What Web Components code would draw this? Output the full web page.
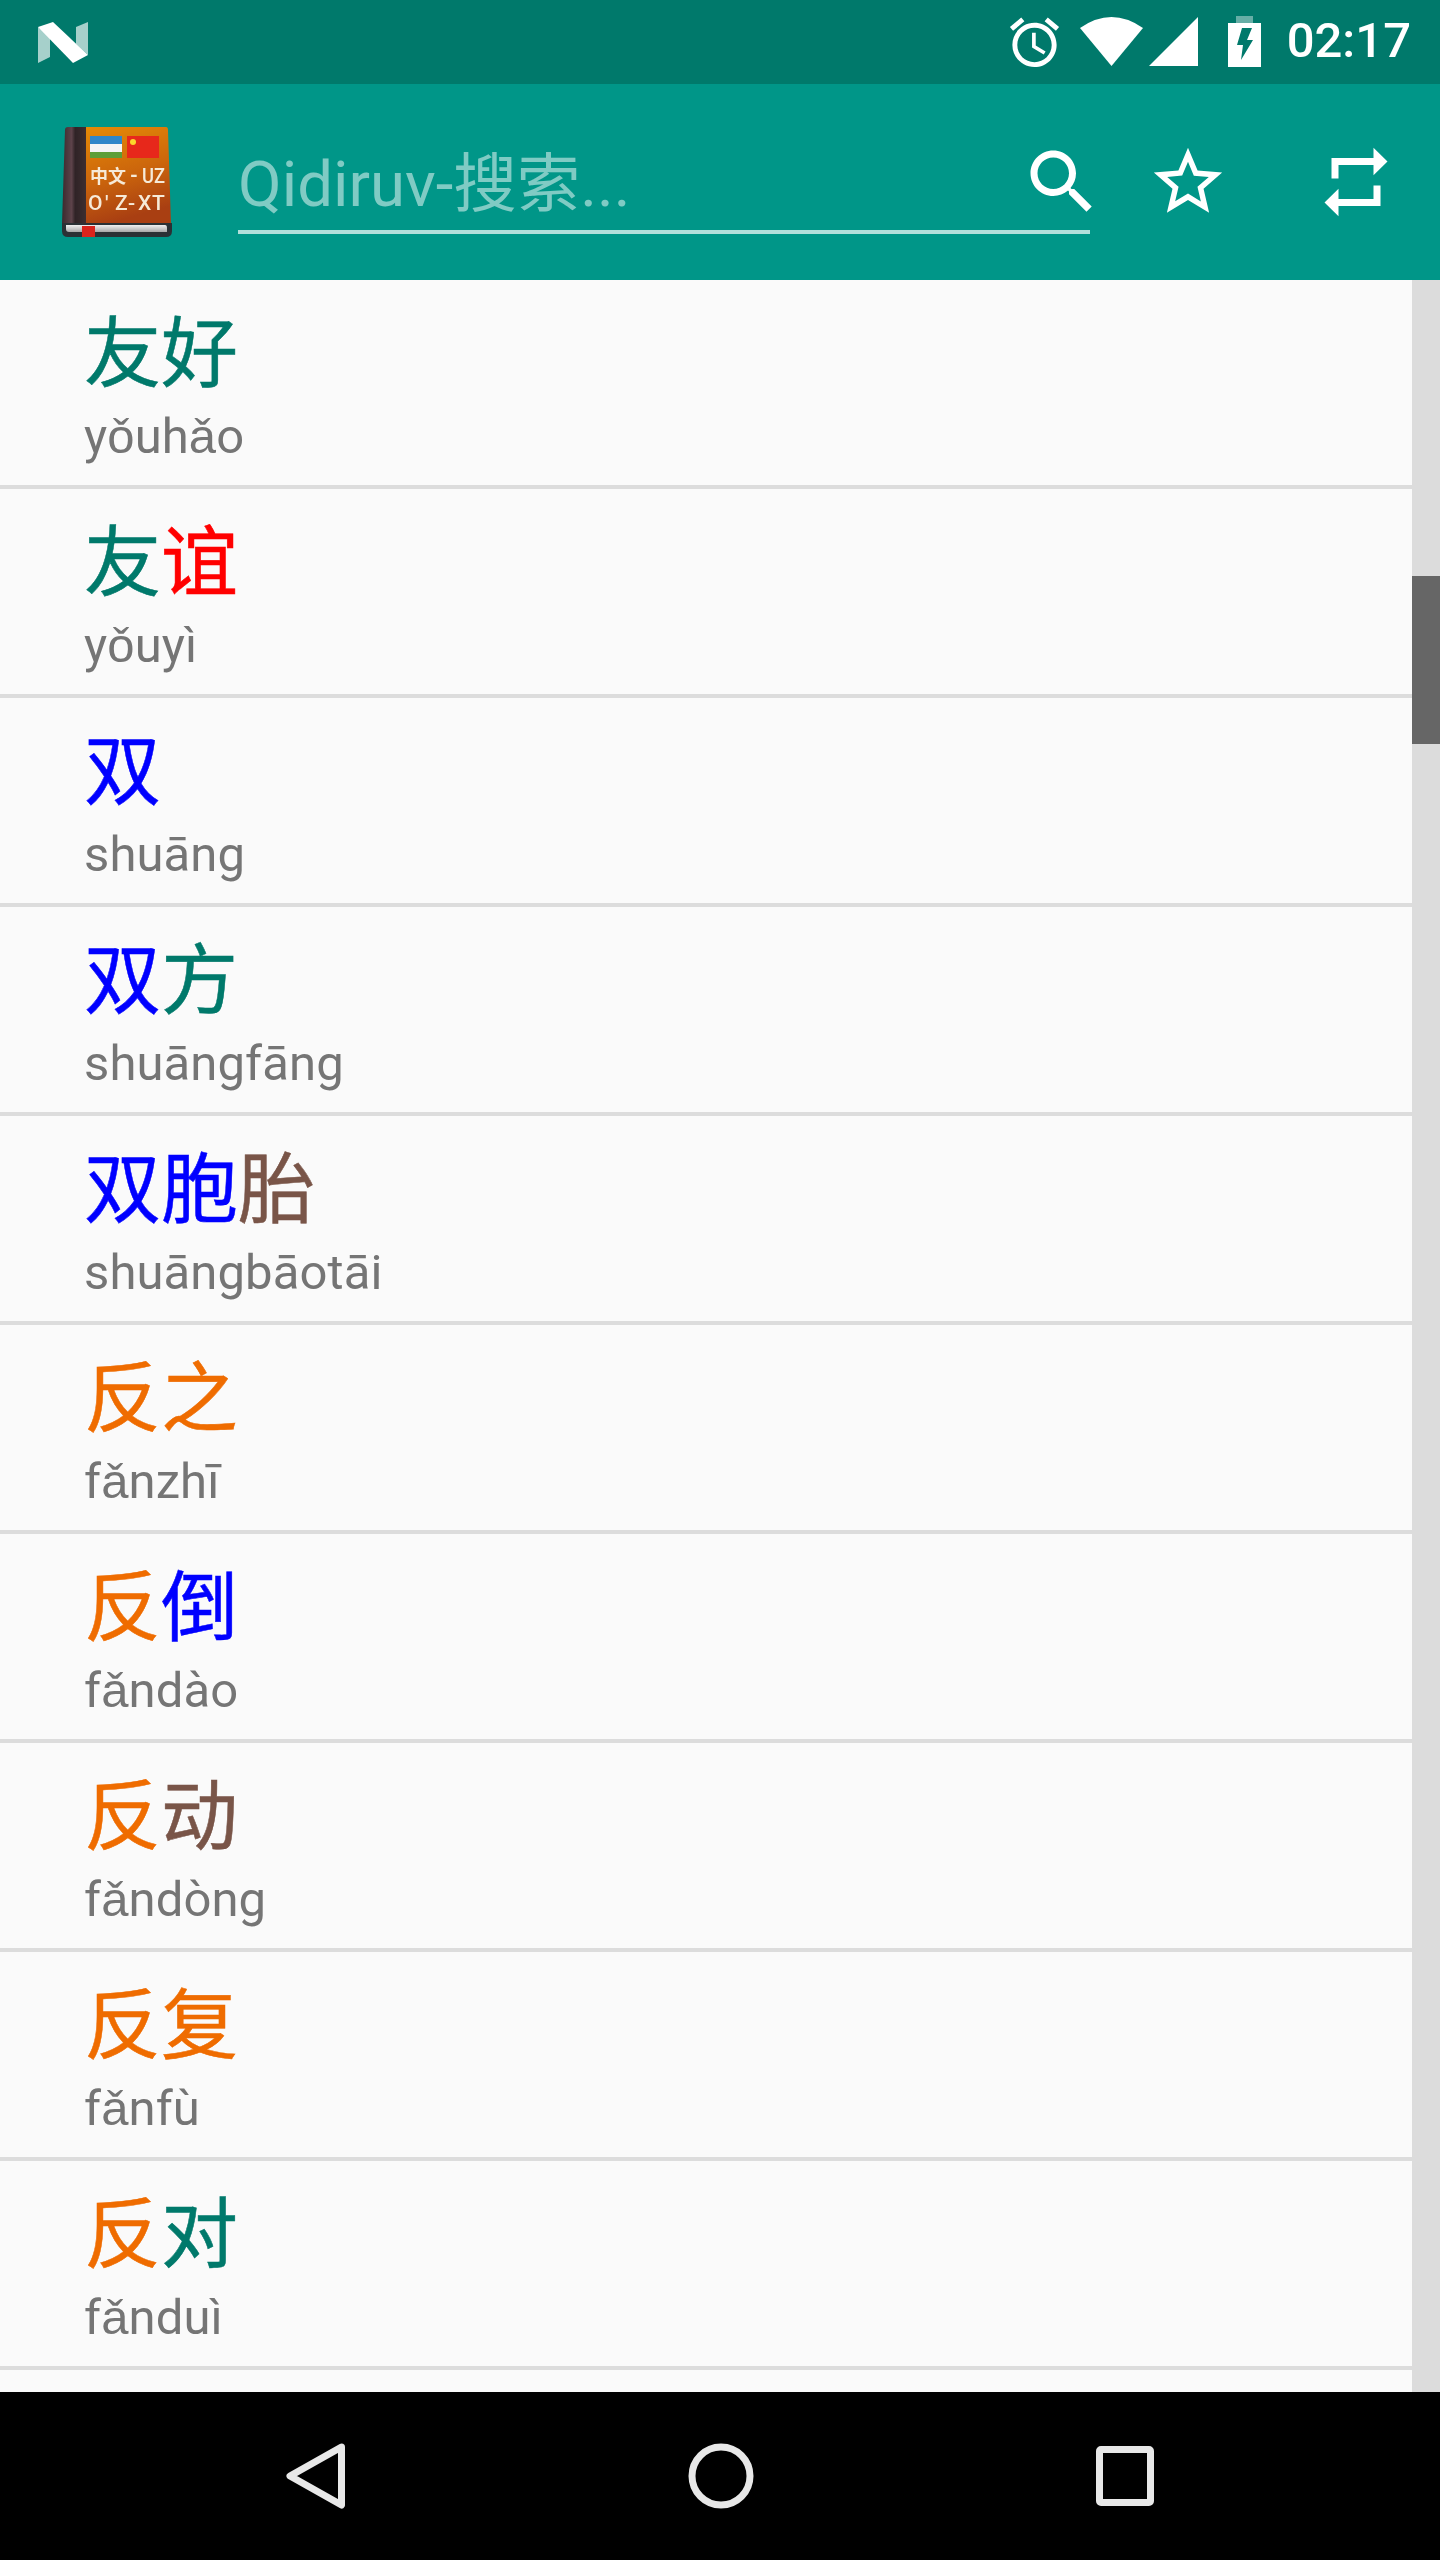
<!DOCTYPE html>
<html><head><meta charset="utf-8"><style>
html,body{margin:0;padding:0;background:#fafafa}
body{font-family:Roboto,"Noto Sans CJK SC",sans-serif}
dict-app{display:flex;flex-direction:column;width:1440px;height:2560px;overflow:hidden}
</style></head><body>
<dict-app>
  <status-bar></status-bar>
  <app-toolbar></app-toolbar>
  <word-list>
    <word-row pinyin="yǒuhǎo"><span style="color:#00796b">友好</span></word-row>
    <word-row pinyin="yǒuyì"><span style="color:#00796b">友</span><span style="color:#f00">谊</span></word-row>
    <word-row pinyin="shuāng"><span style="color:#00f">双</span></word-row>
    <word-row pinyin="shuāngfāng"><span style="color:#00f">双</span><span style="color:#00796b">方</span></word-row>
    <word-row pinyin="shuāngbāotāi"><span style="color:#00f">双胞</span><span style="color:#795548">胎</span></word-row>
    <word-row pinyin="fǎnzhī"><span style="color:#ef6c00">反之</span></word-row>
    <word-row pinyin="fǎndào"><span style="color:#ef6c00">反</span><span style="color:#00f">倒</span></word-row>
    <word-row pinyin="fǎndòng"><span style="color:#ef6c00">反</span><span style="color:#795548">动</span></word-row>
    <word-row pinyin="fǎnfù"><span style="color:#ef6c00">反复</span></word-row>
    <word-row pinyin="fǎnduì"><span style="color:#ef6c00">反</span><span style="color:#00796b">对</span></word-row>
  </word-list>
  <nav-bar></nav-bar>
</dict-app>
<script>
function def(name, css, html, extra){
  customElements.define(name, class extends HTMLElement{
    constructor(){super();this.attachShadow({mode:'open'}).innerHTML='<style>'+css+'</style>'+html;}
    connectedCallback(){ if(extra) extra(this); }
  });
}
def('status-bar',`
:host{display:flex;align-items:flex-start;flex:none;height:84px;background:#00796b;color:#fff;box-sizing:border-box;padding:0 29px 0 38px}
svg{display:block;flex:none}
.n{margin-top:22px}
.sp{flex:1}
.alarm{margin-top:13px}
.wifi{margin-top:17px;margin-left:16px}
.sig{margin-top:17px;margin-left:6px}
.bat{margin-top:16px;margin-left:30px}
.time{font:500 49px/84px Roboto,sans-serif;margin-left:26px;margin-top:-1px;letter-spacing:0}
`,`
<svg class="n" width="50" height="41" viewBox="0 0 50 41"><polygon points="0,5 12,14 12,35 0,41" fill="#fff" fill-opacity=".65"/><polygon points="50,0 50,33 38,22 38,5" fill="#fff" fill-opacity=".65"/><polygon points="0,5 15,0 50,33 35,41" fill="#fff"/></svg>
<span class="sp"></span>
<svg class="alarm" width="59" height="59" viewBox="0 0 24 24" fill="#fff"><path d="M22 5.72l-4.6-3.86-1.29 1.53 4.6 3.86L22 5.72zM7.88 3.39L6.6 1.86 2 5.71l1.29 1.53 4.59-3.85zM12.5 8H11v6l4.75 2.85.75-1.23-4-2.37V8zM12 4c-4.97 0-9 4.03-9 9s4.03 9 9 9 9-4.03 9-9-4.03-9-9-9zm0 16c-3.87 0-7-3.13-7-7s3.13-7 7-7 7 3.13 7 7-3.13 7-7 7z"/></svg>
<svg class="wifi" width="63" height="49" viewBox="0 0 63 49"><path d="M0 11Q31.5-11 63 11L31.5 49Z" fill="#fff"/></svg>
<svg class="sig" width="49" height="49" viewBox="0 0 49 49"><polygon points="0,49 49,0 49,49" fill="#fff"/></svg>
<svg class="bat" width="33" height="51" viewBox="0 0 33 51"><rect x="8" y="0" width="17" height="7" fill="#fff" fill-opacity=".4"/><rect x="0" y="7" width="33" height="44" fill="#fff"/><polygon points="14,12 24,12 19,24 25,24 13,44 15,29 9,29" fill="#00796b"/></svg>
<span class="time">02:17</span>
`);
def('app-icon',`:host{display:block;width:110px;height:110px;flex:none}svg{display:block;filter:blur(.5px)}`,`
<svg width="110" height="110" viewBox="0 0 110 110">
<defs><linearGradient id="c" x1="0" y1="0" x2="0.25" y2="1"><stop offset="0" stop-color="#e58a06"/><stop offset=".55" stop-color="#cc660c"/><stop offset="1" stop-color="#a93f12"/></linearGradient>
<linearGradient id="s" x1="0" y1="0" x2="1" y2="0"><stop offset="0" stop-color="#3a2a2e"/><stop offset=".4" stop-color="#5d434a"/><stop offset=".55" stop-color="#2f2326"/><stop offset="1" stop-color="#3d2e30"/></linearGradient>
<linearGradient id="p" x1="0" y1="0" x2="0" y2="1"><stop offset="0" stop-color="#f0f0f0"/><stop offset="1" stop-color="#a8a8a8"/></linearGradient></defs>
<path d="M3 3Q3 0 6 0H24V97H0Z" fill="url(#s)"/>
<path d="M24 0H104Q106 0 106 3L109 97H24Z" fill="url(#c)"/>
<path d="M0 96H110V104Q110 110 104 110H6Q0 110 0 104Z" fill="#2b3135"/>
<path d="M4 98H103Q105 98 105 101V105H7Q4 105 4 102Z" fill="url(#p)"/>
<rect x="20" y="99" width="13" height="11" fill="#d9241c"/>
<rect x="28" y="9" width="32" height="8" fill="#2f86c9"/><rect x="28" y="17" width="32" height="8" fill="#f4f4f4"/><rect x="28" y="25" width="32" height="6" fill="#5c9e37"/>
<rect x="65" y="9" width="32" height="22" fill="#e7281b"/><circle cx="71" cy="15" r="3" fill="#fbd72b"/>
<text x="28" y="56" font-family="'Noto Sans CJK SC',sans-serif" font-weight="700" font-size="18" fill="#f6ead8">中文</text>
<text x="68" y="55" font-family="Roboto,sans-serif" font-weight="700" font-size="20" fill="#f6ead8">-</text>
<text x="80" y="56" font-family="Roboto,sans-serif" font-weight="500" font-size="21" fill="#f6ead8" textLength="23" lengthAdjust="spacingAndGlyphs">UZ</text>
<text x="26 43 53 66 76 90" y="83" font-family="Roboto,sans-serif" font-weight="500" font-size="21" fill="#f6ead8">O'Z-XT</text>
</svg>`);
def('search-field',`
:host{display:flex;align-items:center;box-sizing:border-box;width:852px;height:100px;border-bottom:4px solid #b2dfdb;margin:50px 0 0 66px;flex:none;align-self:flex-start}
.ph{flex:1;font:400 63.5px/100px Roboto,"Noto Sans CJK SC",sans-serif;color:#80cbc4;white-space:nowrap;padding-top:6px}
svg{display:block;flex:none;margin-right:-14px}
`,`<span class="ph">Qidiruv-搜索...</span>
<svg width="84" height="84" viewBox="0 0 24 24" fill="#fff"><path d="M15.5 14h-.79l-.28-.27C15.41 12.59 16 11.11 16 9.5 16 5.91 13.09 3 9.5 3S3 5.91 3 9.5 5.91 16 9.5 16c1.61 0 3.09-.59 4.23-1.57l.27.28v.79l5 4.99L20.49 19l-4.99-5zm-6 0C7.01 14 5 11.99 5 9.5S7.01 5 9.5 5 14 7.01 14 9.5 11.99 14 9.5 14z"/></svg>`);
def('app-toolbar',`
:host{display:flex;align-items:center;flex:none;height:196px;background:#009688;padding-left:62px;box-sizing:border-box}
svg{display:block;flex:none;fill:#fff}
.star{margin-left:57px}
.rep{margin-left:85px}
`,`<app-icon></app-icon><search-field></search-field>
<svg class="star" width="82" height="82" viewBox="0 0 24 24"><path d="M22 9.24l-7.19-.62L12 2 9.19 8.63 2 9.24l5.46 4.73L5.82 21 12 17.27 18.18 21l-1.63-7.03L22 9.24zM12 15.4l-3.76 2.27 1-4.28-3.32-2.88 4.38-.38L12 6.1l1.71 4.04 4.38.38-3.32 2.88 1 4.28L12 15.4z"/></svg>
<svg class="rep" width="84" height="82" viewBox="0 0 24 24" preserveAspectRatio="none"><path d="M7 7h10v3l4-4-4-4v3H5v6h2V7zm10 10H7v-3l-4 4 4 4v-3h12v-6h-2v4z"/></svg>`);
def('word-list',`
:host{display:flex;flex:1;min-height:0;background:#fafafa;overflow:hidden}
.rows{flex:1;min-width:0}
.track{flex:none;width:28px;background:#dcdcdc}
.thumb{margin-top:296px;height:168px;background:#666}
`,`<div class="rows"><slot></slot></div><div class="track"><div class="thumb"></div></div>`);
def('word-row',`
:host{display:block;box-sizing:border-box;height:209px;border-bottom:4px solid #dcdcdc;padding:12px 0 0 84px}
.h{font:400 77px/112px "Noto Sans CJK SC",sans-serif;white-space:nowrap;height:116px;-webkit-text-stroke:.5px}
.p{font:400 49px/58px Roboto,sans-serif;color:#757575;white-space:nowrap;letter-spacing:.1px}
`,`<div class="h"><slot></slot></div><div class="p"></div>`,el=>{el.shadowRoot.querySelector('.p').textContent=el.getAttribute('pinyin')});
def('nav-bar',`
:host{display:flex;flex:none;height:168px;background:#000;justify-content:center;align-items:center;gap:342px;box-sizing:border-box}
svg{display:block;flex:none;fill:none;stroke:#e8e8e8;stroke-width:7;stroke-linejoin:round}
`,`<svg width="60" height="66" viewBox="0 0 60 66"><path d="M55.5 4 4 33 55.5 62Z"/></svg>
<svg width="66" height="66" viewBox="0 0 66 66"><circle cx="33" cy="33" r="29"/></svg>
<svg width="58" height="60" viewBox="0 0 58 60"><rect x="3.5" y="3.5" width="51" height="53" rx="1.5"/></svg>`);
</script>
</body></html>
